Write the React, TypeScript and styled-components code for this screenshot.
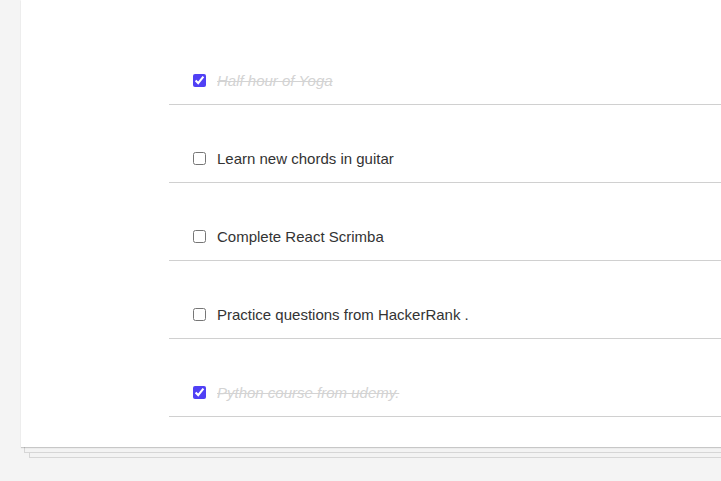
import styled, { createGlobalStyle } from "styled-components";

const GlobalStyle = createGlobalStyle`
  html, body {
    margin: 0;
    padding: 0;
    background: #f4f4f4;
    overflow: hidden;
  }

  body {
    font-family: "Liberation Sans", Arial, sans-serif;
  }
`;

const Page = styled.main`
  padding-left: 21px;
  height: 481px;
`;

// stacked sheets under the card
const Paper = styled.section`
  background: #fff;
  padding: 27px 0 30px 148px;
  box-shadow: 0 1px 1px rgba(0, 0, 0, 0.18), 0 9px 0 -4px #f3f3f3,
    0 9px 0 -3px #d6d6d6, 0 19px 0 -9px #f3f3f3, 0 19px 0 -8px #d6d6d6;
  margin-right: -20px;
`;

const List = styled.ul`
  list-style: none;
  margin: 0;
  padding: 0;
`;

const Item = styled.li`
  display: flex;
  align-items: center;
  padding: 45px 0 15px 20px;
  border-bottom: 1px solid #d0d0d0;
  line-height: 17px;
`;

const Check = styled.input`
  width: 13px;
  height: 13px;
  margin: 0 11px 0 4px;
  accent-color: #5040f5;
`;

const Label = styled.span<{ $done: boolean }>`
  font-size: 15px;
  color: ${(props) => (props.$done ? "#d3d3d3" : "#333")};
  font-style: ${(props) => (props.$done ? "italic" : "normal")};
  text-decoration: ${(props) => (props.$done ? "line-through" : "none")};
`;

const todos = [
  { text: "Half hour of Yoga", done: true },
  { text: "Learn new chords in guitar", done: false },
  { text: "Complete React Scrimba", done: false },
  { text: "Practice questions from HackerRank .", done: false },
  { text: "Python course from udemy.", done: true },
];

function App() {
  return (
    <>
      <GlobalStyle />
      <Page>
        <Paper>
          <List>
            {todos.map((todo) => (
              <Item key={todo.text}>
                <Check type="checkbox" defaultChecked={todo.done} />
                <Label $done={todo.done}>{todo.text}</Label>
              </Item>
            ))}
          </List>
        </Paper>
      </Page>
    </>
  );
}

export default App;
